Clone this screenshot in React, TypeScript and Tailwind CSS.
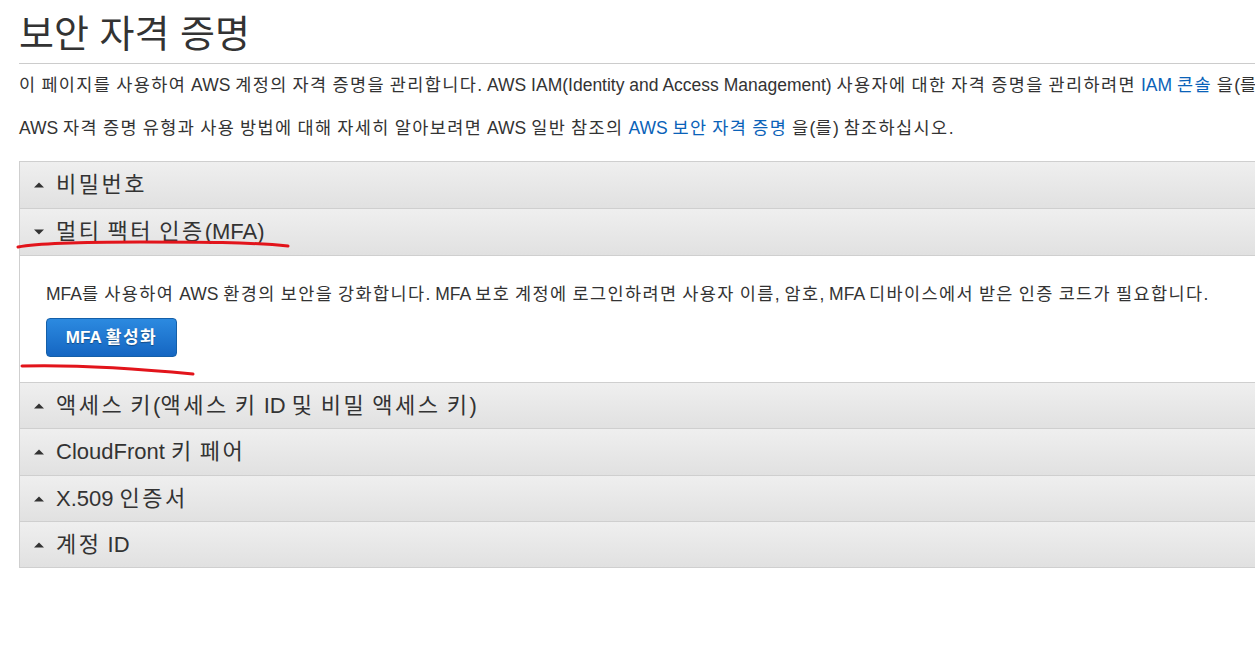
import React from 'react';

const FONT = '"Liberation Sans", "Noto Sans CJK KR", Arial, sans-serif';

// Hangul in the installed CJK font runs narrower than the original page's font,
// so Hangul runs get their own letter spacing
type Track = 'head' | 'body' | 'btn';
const TRACK: Record<Track, string> = {
    head: 'tracking-[2.5px]',
    body: 'tracking-[1.4px]',
    btn: 'tracking-[1.5px]',
};

function K({ text, t }: { text: string; t: Track }) {
    const parts = text.split(/([\uac00-\ud7a3]+)/);
    return (
        <>
            {parts.map((p, i) =>
                /[\uac00-\ud7a3]/.test(p) ? <span key={i} className={TRACK[t]}>{p}</span> : <React.Fragment key={i}>{p}</React.Fragment>
            )}
        </>
    );
}

function Caret({ open }: { open: boolean }) {
    return (
        <svg width="12" height="8" viewBox="0 0 12 8" className="shrink-0">
            {open ? <path d="M1 1.5 L11 1.5 L6 6.5 Z" fill="#333" /> : <path d="M1 6.5 L11 6.5 L6 1.5 Z" fill="#333" />}
        </svg>
    );
}

function Header({ label, open = false, tall = false }: { label: string; open?: boolean; tall?: boolean }) {
    return (
        <div className={`${tall ? 'h-[47px]' : 'h-[46px]'} flex items-center gap-[11px] pl-[13px] bg-gradient-to-b from-[#efefef] to-[#e1e1e1] border-b border-[#cfcfcf] text-[22px] text-[#333]`}>
            <Caret open={open} />
            <span className="leading-none"><K text={label} t="head" /></span>
        </div>
    );
}

export default function App() {
    return (
        <div className="relative w-[1255px] h-[650px] overflow-hidden bg-white" style={{ fontFamily: FONT }}>
            <div className="w-[1700px] pl-[19px]">
                <h1 className="pt-[12px] pb-[7px] text-[38px] leading-[44px] text-[#333] border-b border-[#cccccc]">
                    보안 자격 증명
                </h1>
                <p className="mt-[10px] text-[17.5px] leading-[22px] text-[#333]">
                    <K text="이 페이지를 사용하여 AWS 계정의 자격 증명을 관리합니다. AWS IAM(Identity and Access Management) 사용자에 대한 자격 증명을 관리하려면 " t="body" />
                    <a className="text-[#0a62b8]"><K text="IAM 콘솔" t="body" /></a>
                    <K text=" 을(를) 사용하십시오." t="body" />
                </p>
                <p className="mt-[21px] text-[17.5px] leading-[22px] text-[#333]">
                    <K text="AWS 자격 증명 유형과 사용 방법에 대해 자세히 알아보려면 AWS 일반 참조의 " t="body" />
                    <a className="text-[#0a62b8]"><K text="AWS 보안 자격 증명" t="body" /></a>
                    <K text=" 을(를) 참조하십시오." t="body" />
                </p>
                <div className="mt-[22px] border-l border-t border-[#cfcfcf]">
                    <Header label="비밀번호" tall />
                    <Header label="멀티 팩터 인증(MFA)" open tall />
                    <div className="h-[127px] border-b border-[#cfcfcf] bg-white pl-[26px] pt-[27px]">
                        <p className="text-[17.5px] leading-[22px] text-[#333]">
                            <K text="MFA를 사용하여 AWS 환경의 보안을 강화합니다. MFA 보호 계정에 로그인하려면 사용자 이름, 암호, MFA 디바이스에서 받은 인증 코드가 필요합니다." t="body" />
                        </p>
                        <button className="mt-[13px] w-[131px] h-[39px] rounded-[4px] border border-[#145fa8] bg-gradient-to-b from-[#2c8ae0] to-[#1566c2] text-white text-[17px] font-bold [text-shadow:0_1px_1px_rgba(0,0,0,0.35)]">
                            <K text="MFA 활성화" t="btn" />
                        </button>
                    </div>
                    <Header label="액세스 키(액세스 키 ID 및 비밀 액세스 키)" />
                    <Header label="CloudFront 키 페어" tall />
                    <Header label="X.509 인증서" />
                    <Header label="계정 ID" />
                </div>
            </div>
            <svg className="absolute left-0 top-0 pointer-events-none" width="1255" height="650">
                <path d="M18 247 C 40 243, 80 242, 140 242 S 250 242, 288 246" stroke="#e2141b" strokeWidth="3" fill="none" strokeLinecap="round" />
                <path d="M22 366 C 60 365, 120 367, 193 374" stroke="#e2141b" strokeWidth="3" fill="none" strokeLinecap="round" />
            </svg>
        </div>
    );
}
